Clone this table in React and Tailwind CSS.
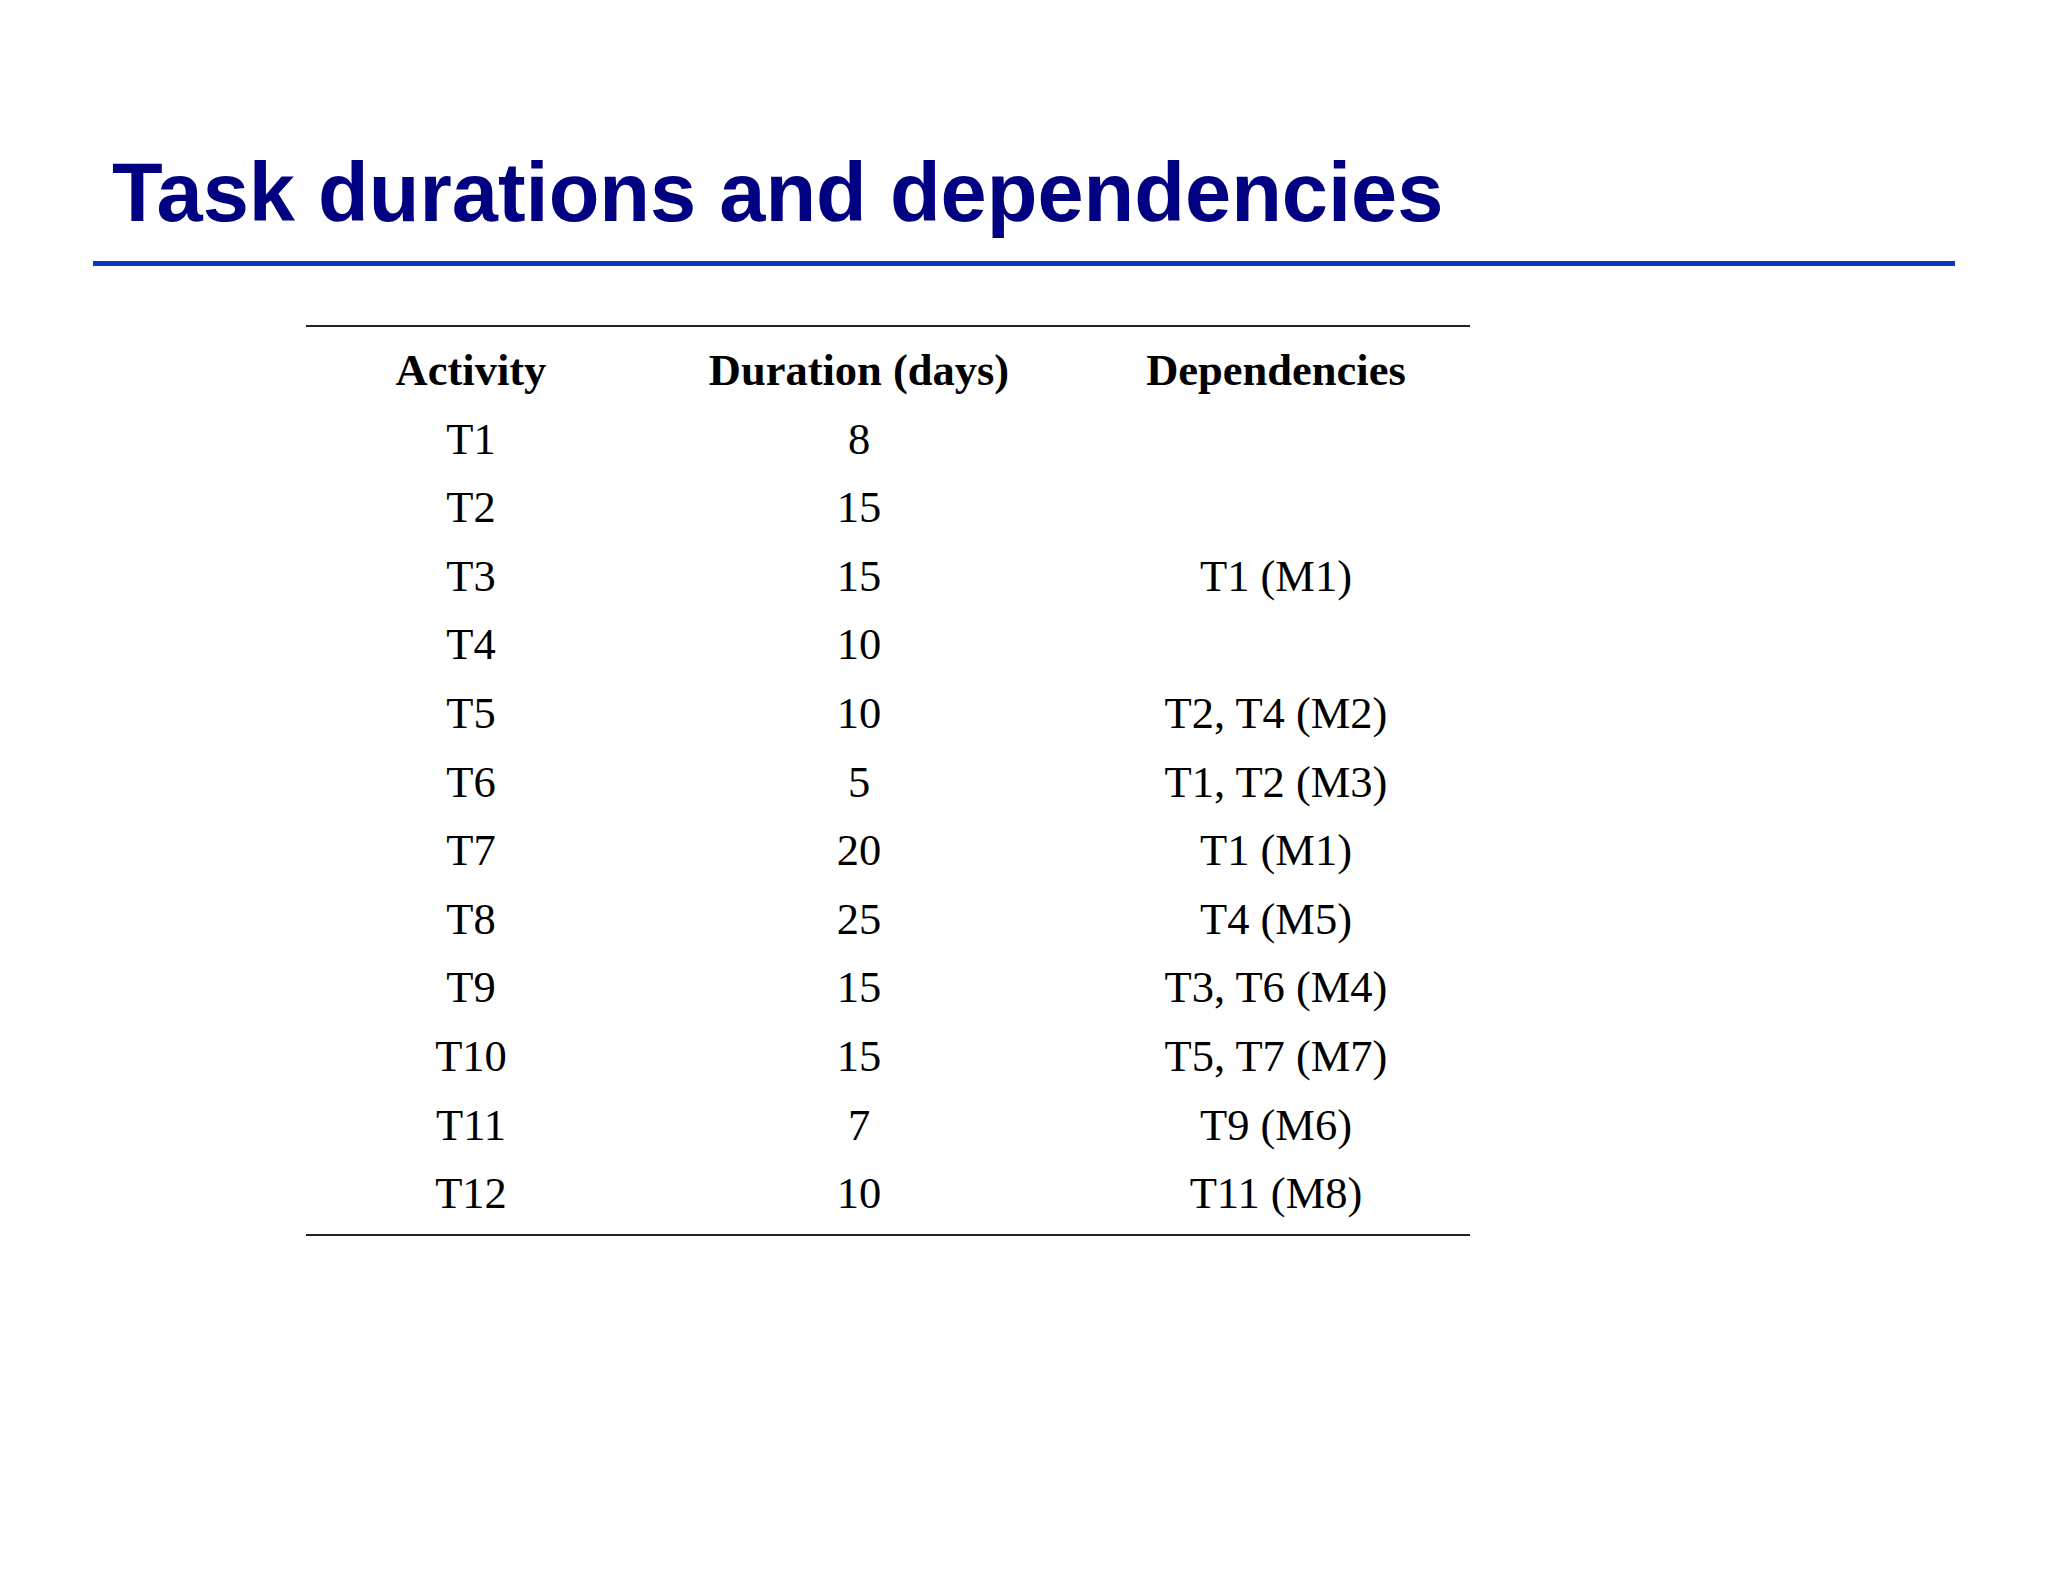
import React from "react";

const rows = [
  ["T1", "8", ""],
  ["T2", "15", ""],
  ["T3", "15", "T1 (M1)"],
  ["T4", "10", ""],
  ["T5", "10", "T2, T4 (M2)"],
  ["T6", "5", "T1, T2 (M3)"],
  ["T7", "20", "T1 (M1)"],
  ["T8", "25", "T4 (M5)"],
  ["T9", "15", "T3, T6 (M4)"],
  ["T10", "15", "T5, T7 (M7)"],
  ["T11", "7", "T9 (M6)"],
  ["T12", "10", "T11 (M8)"],
];

function Row({ cells, bold }) {
  return (
    <div
      className={`grid grid-cols-[330px_446px_388px] h-[68.6px] leading-[68.6px] text-[44.5px] text-black text-center ${
        bold ? "font-bold" : "font-normal"
      }`}
    >
      {cells.map((c, i) => (
        <div key={i} className="whitespace-pre">
          {c}
        </div>
      ))}
    </div>
  );
}

export default function App() {
  return (
    <div className="w-[2048px] h-[1582px] bg-white overflow-hidden">
      <div className="pt-[152px] pl-[112px]">
        <h1 className="text-[83px] leading-[82px] font-bold text-[#000080] font-['Liberation_Sans',Arial,sans-serif] whitespace-nowrap">
          Task durations and dependencies
        </h1>
      </div>
      <div className="mt-[27px] mx-[93px] h-[5px] bg-[#0a36c8]" />
      <div className="mt-[59px] ml-[306px] w-[1164px] font-['Liberation_Serif','Times_New_Roman',serif]">
        <div className="h-[2px] bg-[#222]" />
        <div className="pt-[9px] pb-[6px]">
          <Row cells={["Activity", "Duration (days)", "Dependencies"]} bold />
          {rows.map((r, i) => (
            <Row key={i} cells={r} />
          ))}
        </div>
        <div className="h-[2px] bg-[#222]" />
      </div>
    </div>
  );
}
